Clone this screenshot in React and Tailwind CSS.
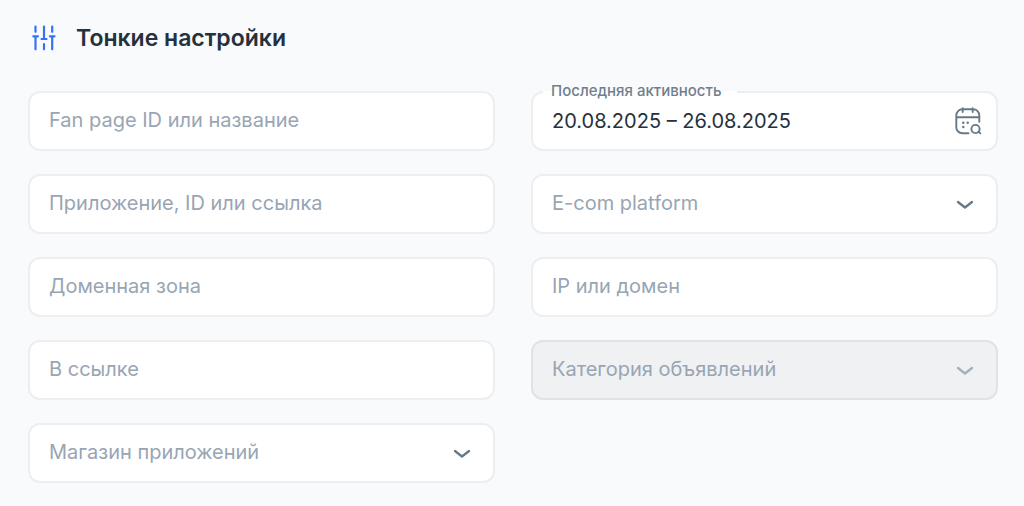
import React, { useState } from 'react';

const controlClass =
  'block h-[60px] w-full appearance-none rounded-xl border-2 px-[19px] text-xl outline-none placeholder:text-[#98a5b3] placeholder:opacity-100';

const SlidersIcon = () => (
  <svg className="h-7 w-6" viewBox="0 0 24 28" fill="none" stroke="#3672f8" strokeWidth="2.2" strokeLinecap="round" aria-hidden="true">
    <path d="M3.500 2.500v5.300M3.500 12.300v13M1.300 12.300h4.600M12 2.500V15M9.500 15h5M12 20v5.300M20.200 2.500v5.300M20.200 12.300v13M17.900 12.300h4.600" />
  </svg>
);

const CalendarIcon = () => (
  <svg className="h-7 w-7" viewBox="0 0 28 28" fill="none" stroke="#667987" strokeWidth="1.9" strokeLinecap="round" aria-hidden="true">
    <path d="M14.500 26.300H8.300a6 6 0 0 1-6-6v-12a6 6 0 0 1 6-6h11a6 6 0 0 1 6 6v6.500M2.300 10.300h23M8.700 1.200v3.800M18.700 1.200v3.800" />
    <circle cx="21.500" cy="22" r="4.100" />
    <path d="M24.500 24.800l1.800 1.600" />
    <path d="M9.300 15.700h.01M13.700 15.700h.01M9.300 20h.01" strokeWidth="2.500" />
  </svg>
);

const ChevronIcon = ({ className }) => (
  <svg className={className} viewBox="0 0 18 12" fill="none" stroke="currentColor" strokeWidth="2.3" strokeLinecap="round" strokeLinejoin="round" aria-hidden="true">
    <path d="M2 4l7 5.500L16 4" />
  </svg>
);

const TextField = ({ label }) => (
  <input
    type="text"
    aria-label={label}
    placeholder={label}
    className={`${controlClass} border-[#eceef1] bg-white pb-0.5 text-[#25313c]`}
  />
);

const SelectField = ({ label, options = [], disabled = false }) => {
  const [value, setValue] = useState('');

  return (
    <div className="relative">
      <select
        aria-label={label}
        value={value}
        disabled={disabled}
        onChange={(e) => setValue(e.target.value)}
        className={`${controlClass} pb-0.5 ${value ? 'text-[#25313c]' : 'text-[#98a5b3]'} ${
          disabled ? 'border-[#dfe2e6] bg-[#f0f1f3] opacity-100' : 'border-[#eceef1] bg-white'
        }`}
      >
        <option value="">{label}</option>
        {options.map((option) => (
          <option key={option} value={option}>{option}</option>
        ))}
      </select>
      <ChevronIcon
        className={`pointer-events-none absolute top-6 right-6 h-3 w-[18px] ${disabled ? 'text-[#a3b0bc]' : 'text-[#667987]'}`}
      />
    </div>
  );
};

const DateField = () => {
  const [range, setRange] = useState('20.08.2025 – 26.08.2025');

  return (
    <div className="relative">
      <input
        id="activity"
        type="text"
        value={range}
        onChange={(e) => setRange(e.target.value)}
        className={`${controlClass} border-[#eceef1] bg-white text-[#25313c]`}
      />
      <label
        htmlFor="activity"
        className="absolute -top-3 left-3 bg-linear-to-b from-[#f9fafc] from-50% to-white to-50% pr-4 pl-2 text-[15px] leading-6 font-medium text-[#6f7f8d]"
      >
        Последняя активность
      </label>
      <button type="button" aria-label="Открыть календарь" className="absolute top-4 right-4">
        <CalendarIcon />
      </button>
    </div>
  );
};

const App = () => {
  return (
    <div className="min-h-screen bg-[#f9fafc] pt-6 pr-[26px] pb-5 pl-7 font-['Inter',sans-serif]">
      <div className="mb-[39px] flex items-center gap-5 pl-1">
        <SlidersIcon />
        <h1 className="text-[23px] leading-7 font-semibold text-[#25313c]">Тонкие настройки</h1>
      </div>
      <form className="grid grid-cols-2 gap-x-9 gap-y-[23px]">
        <TextField label="Fan page ID или название" />
        <DateField />
        <TextField label="Приложение, ID или ссылка" />
        <SelectField label="E-com platform" options={['Shopify', 'WooCommerce', 'Magento']} />
        <TextField label="Доменная зона" />
        <TextField label="IP или домен" />
        <TextField label="В ссылке" />
        <SelectField label="Категория объявлений" disabled />
        <SelectField label="Магазин приложений" options={['App Store', 'Google Play']} />
      </form>
    </div>
  );
};

export default App;
